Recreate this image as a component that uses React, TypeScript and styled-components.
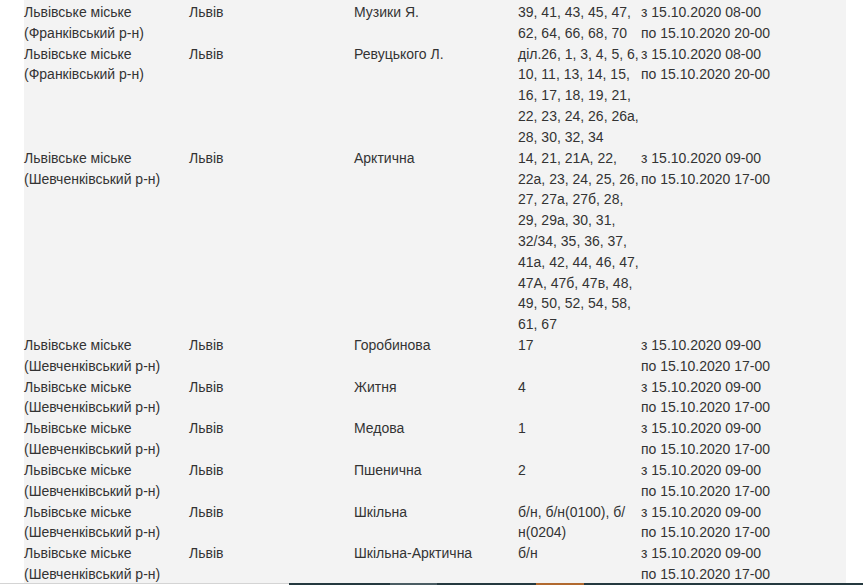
import React from "react";
import styled, { createGlobalStyle } from "styled-components";

const Global = createGlobalStyle`
  html, body { margin: 0; padding: 0; background: #ffffff; overflow: hidden; }
  body { font-family: "Liberation Sans", Arial, sans-serif; }
`;

const Page = styled.div`
  width: 863px;
  height: 585px;
  overflow: hidden;
`;

const Content = styled.div`
  margin: 0 17px 0 24px;
  padding-top: 2px;
  background: #f3f3f3;
`;

const Table = styled.table`
  width: 822px;
  table-layout: fixed;
  border-collapse: collapse;
  border-spacing: 0;
  font-size: 14px;
  line-height: 20.82px;
  color: #333333;
`;

const Cell = styled.td`
  padding: 0;
  vertical-align: top;
  text-align: left;
`;

const Footer = styled.div`
  position: fixed;
  left: 0;
  right: 0;
  bottom: 0;
  height: 2px;
  display: flex;
`;

const Segment = styled.div<{ $w: number; $c: string; $line?: boolean }>`
  flex: 0 0 ${(p) => p.$w}px;
  background: ${(p) => p.$c};
  border-top: ${(p) => (p.$line ? "1px solid #d4d4d4" : "none")};
  box-sizing: border-box;
`;

type Row = { area: string; city: string; street: string; houses: string; from: string; to: string };

const F = "Львівське міське (Франківський р-н)";
const S = "Львівське міське (Шевченківський р-н)";
const T9 = ["з 15.10.2020 09-00", "по 15.10.2020 17-00"];

const rows: Row[] = [
  { area: F, city: "Львів", street: "Музики Я.", houses: "39, 41, 43, 45, 47, 62, 64, 66, 68, 70", from: "з 15.10.2020 08-00", to: "по 15.10.2020 20-00" },
  { area: F, city: "Львів", street: "Ревуцького Л.", houses: "діл.26, 1, 3, 4, 5, 6, 10, 11, 13, 14, 15, 16, 17, 18, 19, 21, 22, 23, 24, 26, 26а, 28, 30, 32, 34", from: "з 15.10.2020 08-00", to: "по 15.10.2020 20-00" },
  { area: S, city: "Львів", street: "Арктична", houses: "14, 21, 21А, 22, 22а, 23, 24, 25, 26, 27, 27а, 27б, 28, 29, 29а, 30, 31, 32/34, 35, 36, 37, 41а, 42, 44, 46, 47, 47А, 47б, 47в, 48, 49, 50, 52, 54, 58, 61, 67", from: T9[0], to: T9[1] },
  { area: S, city: "Львів", street: "Горобинова", houses: "17", from: T9[0], to: T9[1] },
  { area: S, city: "Львів", street: "Житня", houses: "4", from: T9[0], to: T9[1] },
  { area: S, city: "Львів", street: "Медова", houses: "1", from: T9[0], to: T9[1] },
  { area: S, city: "Львів", street: "Пшенична", houses: "2", from: T9[0], to: T9[1] },
  { area: S, city: "Львів", street: "Шкільна", houses: "б/н, б/н(0100), б/н(0204)", from: T9[0], to: T9[1] },
  { area: S, city: "Львів", street: "Шкільна-Арктична", houses: "б/н", from: T9[0], to: T9[1] },
];

export default function App() {
  return (
    <Page>
      <Global />
      <Content>
        <Table>
          <colgroup>
            <col style={{ width: 165 }} />
            <col style={{ width: 165 }} />
            <col style={{ width: 164 }} />
            <col style={{ width: 123 }} />
            <col style={{ width: 205 }} />
          </colgroup>
          <tbody>
            {rows.map((r, i) => (
              <tr key={i}>
                <Cell>{r.area}</Cell>
                <Cell>{r.city}</Cell>
                <Cell>{r.street}</Cell>
                <Cell>{r.houses}</Cell>
                <Cell>
                  {r.from}
                  <br />
                  {r.to}
                </Cell>
              </tr>
            ))}
          </tbody>
        </Table>
      </Content>
      <Footer>
        <Segment $w={289} $c="#ffffff" $line />
        <Segment $w={101} $c="#25393f" />
        <Segment $w={47} $c="#4b5d63" />
        <Segment $w={99} $c="#25393f" />
        <Segment $w={48} $c="#b1692f" />
        <Segment $w={279} $c="#25393f" />
      </Footer>
    </Page>
  );
}
